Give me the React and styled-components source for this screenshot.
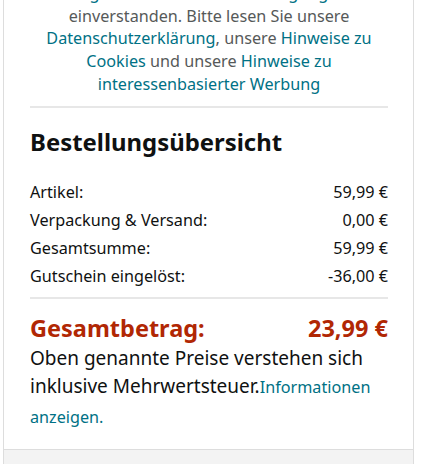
import React from 'react';
import styled, { createGlobalStyle } from 'styled-components';

const GlobalStyle = createGlobalStyle`
  html, body {
    margin: 0;
    padding: 0;
    background: #fff;
    font-family: "Noto Sans", "Open Sans", sans-serif;
    color: #0f1111;
    overflow: hidden;
  }
`;

const rows = [
  { label: 'Artikel:', value: '59,99 €' },
  { label: 'Verpackung & Versand:', value: '0,00 €' },
  { label: 'Gesamtsumme:', value: '59,99 €' },
  { label: 'Gutschein eingelöst:', value: '-36,00 €' }
];

const App = () => (
  <>
    <GlobalStyle />
    <Page>
      <Card>
        <Body>
          <Legal>
            <Link>Allgemeinen Geschäftsbedingungen</Link>
            <br />
            einverstanden. Bitte lesen Sie unsere
            <br />
            <Link>Datenschutzerklärung</Link>, unsere <Link>Hinweise zu</Link>
            <br />
            <Link>Cookies</Link> und unsere <Link>Hinweise zu</Link>
            <br />
            <Link>interessenbasierter Werbung</Link>
          </Legal>
          <Divider $gap={10} />
          <Heading>Bestellungsübersicht</Heading>
          <Rows>
            {rows.map((row) => (
              <Row key={row.label}>
                <span>{row.label}</span>
                <span>{row.value}</span>
              </Row>
            ))}
          </Rows>
          <Divider $gap={6} />
          <TotalRow>
            <span>Gesamtbetrag:</span>
            <span>23,99 €</span>
          </TotalRow>
          <TaxNote>
            Oben genannte Preise verstehen sich inklusive Mehrwertsteuer.
            <SmallLink>Informationen anzeigen.</SmallLink>
          </TaxNote>
        </Body>
        <Footer />
      </Card>
    </Page>
  </>
);

const Page = styled.div`
  padding-left: 3px;
  width: 411px;
  margin-top: -18px;
`;

const Card = styled.div`
  border: 1px solid #dddddd;
  border-top: none;
  background: #fff;
`;

const Body = styled.div`
  padding: 0 25px 18px 26px;
`;

const Legal = styled.p`
  margin: 0;
  text-align: center;
  font-size: 16.2px;
  line-height: 22.7px;
  color: #565959;
`;

const Link = styled.span`
  color: #007185;
`;

const Divider = styled.hr`
  margin: ${(p) => p.$gap}px 0 0;
  border: none;
  height: 2px;
  background: #e7e7e7;
`;

const Heading = styled.h2`
  margin: 18px 0 0;
  font-size: 23.9px;
  line-height: 32px;
  font-weight: 700;
  color: #0f1111;
`;

const Rows = styled.div`
  display: flex;
  flex-direction: column;
  margin-top: 20px;
`;

const Row = styled.div`
  display: flex;
  justify-content: space-between;
  font-size: 16.2px;
  line-height: 28.3px;
  color: #0f1111;
`;

const TotalRow = styled.div`
  display: flex;
  justify-content: space-between;
  margin-top: 14px;
  font-size: 23.5px;
  line-height: 30px;
  font-weight: 700;
  color: #b12704;
`;

const TaxNote = styled.p`
  margin: 1px 0 0;
  font-size: 19px;
  line-height: 28.5px;
  color: #0f1111;
`;

const SmallLink = styled.span`
  font-size: 16.2px;
  color: #007185;
`;

const Footer = styled.div`
  height: 20px;
  background: #f3f3f3;
  border-top: 1px solid #dddddd;
`;

export default App;
